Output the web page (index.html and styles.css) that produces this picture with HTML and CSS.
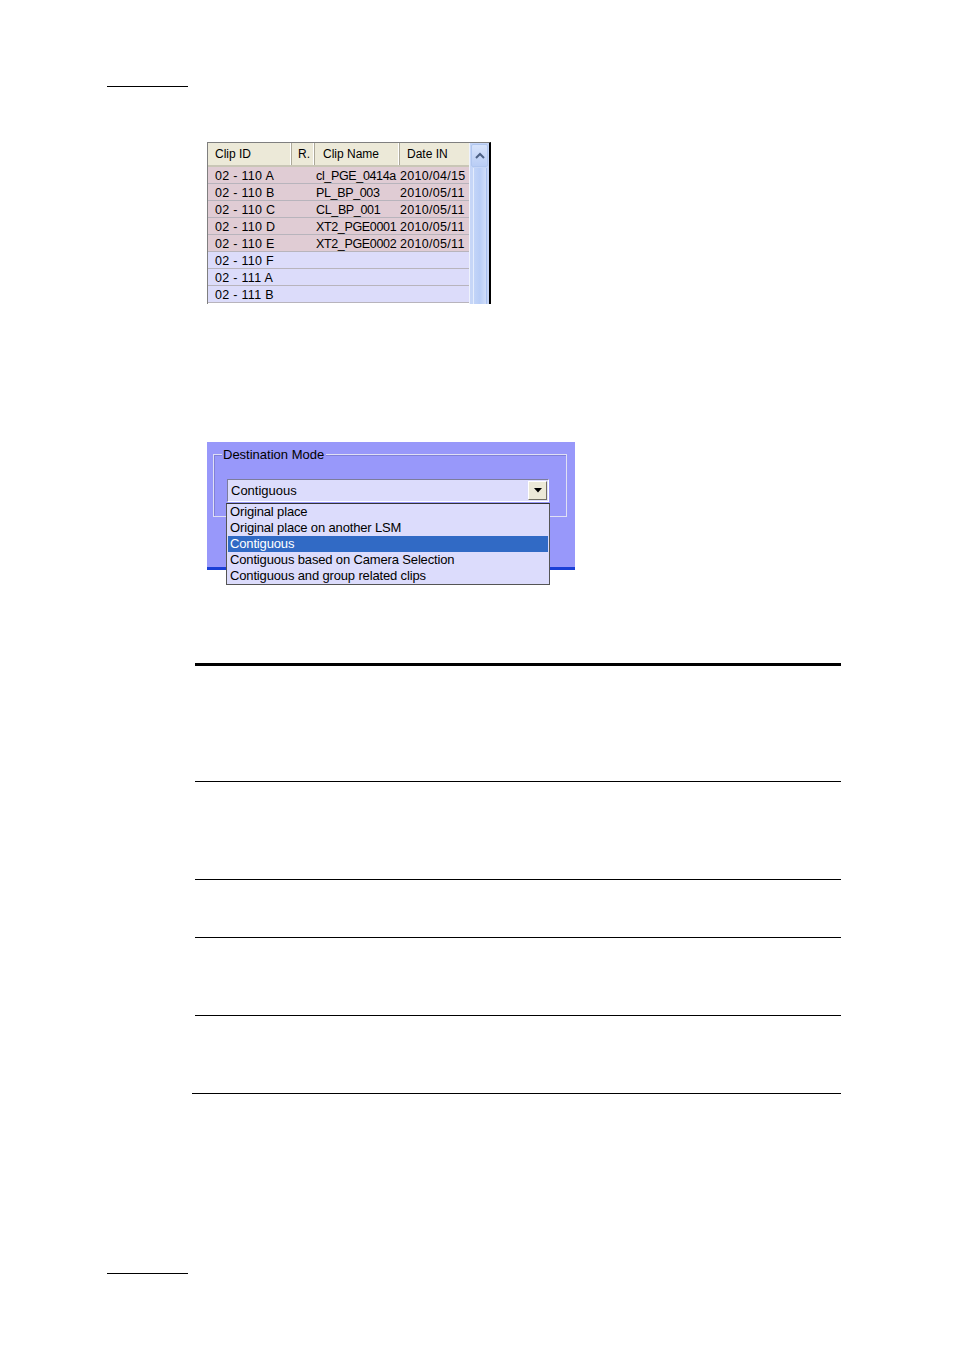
FILE: index.html
```html
<!DOCTYPE html>
<html>
<head>
<meta charset="utf-8">
<link rel="stylesheet" href="styles.css">
</head>
<body>
<div class="page">
  <div class="head-rule"></div>

  <div class="grid-shot">
    <div class="grid-main">
      <div class="hdr">
        <div class="hc c1">Clip ID</div>
        <div class="hc c2">R.</div>
        <div class="hc c3">Clip Name</div>
        <div class="hc c4">Date IN</div>
      </div>
      <div class="row pink"><div class="c1">02 - 110 A</div><div class="c2"></div><div class="c3">cl_PGE_0414a</div><div class="c4">2010/04/15</div></div>
      <div class="row pink"><div class="c1">02 - 110 B</div><div class="c2"></div><div class="c3">PL_BP_003</div><div class="c4">2010/05/11</div></div>
      <div class="row pink"><div class="c1">02 - 110 C</div><div class="c2"></div><div class="c3">CL_BP_001</div><div class="c4">2010/05/11</div></div>
      <div class="row pink"><div class="c1">02 - 110 D</div><div class="c2"></div><div class="c3">XT2_PGE0001</div><div class="c4">2010/05/11</div></div>
      <div class="row pink"><div class="c1">02 - 110 E</div><div class="c2"></div><div class="c3">XT2_PGE0002</div><div class="c4">2010/05/11</div></div>
      <div class="row blue"><div class="c1">02 - 110 F</div><div class="c2"></div><div class="c3"></div><div class="c4"></div></div>
      <div class="row blue"><div class="c1">02 - 111 A</div><div class="c2"></div><div class="c3"></div><div class="c4"></div></div>
      <div class="row blue"><div class="c1">02 - 111 B</div><div class="c2"></div><div class="c3"></div><div class="c4"></div></div>
    </div>
    <div class="scroll">
      <div class="sbtn">
        <svg width="10" height="7" viewBox="0 0 10 7"><path d="M1 6 L5 2 L9 6" fill="none" stroke="#4d6185" stroke-width="2"/></svg>
      </div>
      <div class="strack"></div>
    </div>
  </div>

  <div class="dest-shot">
    <div class="group">
      <div class="legend">Destination Mode</div>
      <div class="combo">
        <div class="combo-text">Contiguous</div>
        <div class="combo-btn">
          <svg width="8" height="5" viewBox="0 0 8 5"><path d="M0 0 H8 L4 4.5 Z" fill="#000"/></svg>
        </div>
      </div>
    </div>
    <div class="list">
      <div class="item">Original place</div>
      <div class="item">Original place on another LSM</div>
      <div class="item sel">Contiguous</div>
      <div class="item">Contiguous based on Camera Selection</div>
      <div class="item">Contiguous and group related clips</div>
    </div>
  </div>

  <div class="rules">
    <div class="rrow r1"></div>
    <div class="rrow r2"></div>
    <div class="rrow r3"></div>
    <div class="rrow r4"></div>
    <div class="rrow r5 last"></div>
  </div>

  <div class="foot-rule"></div>
</div>
</body>
</html>
```

FILE: styles.css
```css
html, body {
  margin: 0;
  padding: 0;
  background: #fff;
}
body {
  font-family: "Liberation Sans", Arial, sans-serif;
  color: #000;
}
.page {
  width: 954px;
  height: 1350px;
  padding-top: 86px;
  box-sizing: border-box;
}
.head-rule, .foot-rule {
  margin-left: 107px;
  width: 81px;
  height: 0;
  border-top: 1px solid #000;
}

/* ---- clip grid screenshot ---- */
.grid-shot {
  margin-top: 55px;
  margin-left: 207px;
  width: 284px;
  height: 162px;
  display: flex;
  box-sizing: border-box;
  border-left: 1px solid #7f7f7f;
  border-top: 1px solid #7f7f7f;
  border-right: 2px solid #000;
  overflow: hidden;
  font-size: 12px;
}
.grid-main {
  width: 261px;
  display: flex;
  flex-direction: column;
}
.hdr {
  display: flex;
  height: 22px;
  background: #ece9d8;
  border-bottom: 2px solid #c9c6b6;
}
.hc {
  line-height: 22px;
  padding-left: 7px;
  box-sizing: border-box;
  border-right: 1px solid #aca899;
  box-shadow: inset -1px 0 0 #fff;
}
.c1 { width: 84px; box-sizing: border-box; padding-left: 7px; }
.c2 { width: 23px; box-sizing: border-box; padding-left: 6px; }
.c3 { width: 85px; box-sizing: border-box; padding-left: 1px; white-space: nowrap; }
.c4 { width: 69px; box-sizing: border-box; padding-left: 0; white-space: nowrap; }
.hdr .c3 { padding-left: 8px; }
.hdr .c4 { padding-left: 7px; border-right: none; box-shadow: none; }
.row {
  display: flex;
  height: 17px;
  padding-top: 1px;
  line-height: 16px;
  box-sizing: border-box;
  border-bottom: 1px solid #b8b4bc;
  font-size: 12.5px;
}
.row .c1, .row .c4 { letter-spacing: 0.3px; }
.row .c3 { letter-spacing: -0.35px; }
.pink { background: #e0ccd4; }
.blue { background: #dcdcfa; }
.scroll {
  width: 21px;
  display: flex;
  flex-direction: column;
  background: #c6d6f7;
  border-left: 1px solid #eef2fc;
}
.sbtn {
  height: 21px;
  margin: 1px 1px 1px 1px;
  background: linear-gradient(#d7e3fb, #b9cdf5);
  border: 1px solid #b0c6ef;
  border-radius: 2px;
  display: flex;
  align-items: center;
  justify-content: center;
}
.strack {
  flex: 1;
  margin: 0 2px 0 3px;
  background: linear-gradient(90deg, #c2d4f8, #b8cdf6 50%, #d0ddf9);
  border-left: 1px solid #e4ecfc;
  border-right: 1px solid #a9c0ee;
}

/* ---- destination mode screenshot ---- */
.dest-shot {
  position: relative;
  margin-top: 138px;
  margin-left: 207px;
  width: 368px;
  height: 128px;
  box-sizing: border-box;
  background: #9898fa;
  border-bottom: 3px solid #1a3fd6;
  padding: 12px 8px 0 6px;
  font-size: 13px;
}
.group {
  position: relative;
  height: 61px;
  border: 1px solid #e0e0f4;
  box-shadow: inset 1px 1px 0 #8080d8;
}
.legend {
  position: absolute;
  top: -8px;
  left: 8px;
  padding: 0 2px 0 1px;
  background: #9898fa;
  line-height: 15px;
}
.combo {
  position: absolute;
  top: 24px;
  left: 13px;
  width: 322px;
  height: 23px;
  box-sizing: border-box;
  background: #dcdcfc;
  border: 1px solid #7c7c9c;
  border-right-color: #fff;
  border-bottom-color: #fff;
  display: flex;
  align-items: center;
}
.combo-text {
  flex: 1;
  padding-left: 3px;
  line-height: 19px;
}
.combo-btn {
  width: 19px;
  height: 19px;
  margin-right: 1px;
  background: #ece9d8;
  box-sizing: border-box;
  border: 1px solid #fff;
  border-right-color: #716f64;
  border-bottom-color: #716f64;
  display: flex;
  align-items: center;
  justify-content: center;
}
.list {
  position: absolute;
  top: 61px;
  left: 19px;
  width: 324px;
  box-sizing: border-box;
  background: #dcdcfc;
  border: 1px solid #555;
  border-top-color: #333;
  padding: 0 1px;
}
.item {
  height: 16px;
  line-height: 16px;
  padding-left: 2px;
  white-space: nowrap;
  letter-spacing: -0.15px;
}
.item.sel {
  background: #316ac5;
  color: #fff;
}

/* ---- empty table rules ---- */
.rules {
  margin-top: 93px;
  margin-left: 195px;
  width: 646px;
  border-top: 3px solid #000;
}
.rrow {
  border-bottom: 1.5px solid #000;
  box-sizing: border-box;
}
.r1 { height: 116px; }
.r2 { height: 98px; }
.r3 { height: 58px; }
.r4 { height: 78px; }
.r5 { height: 78px; margin-left: -3px; }
.foot-rule {
  margin-top: 179px;
}
```
